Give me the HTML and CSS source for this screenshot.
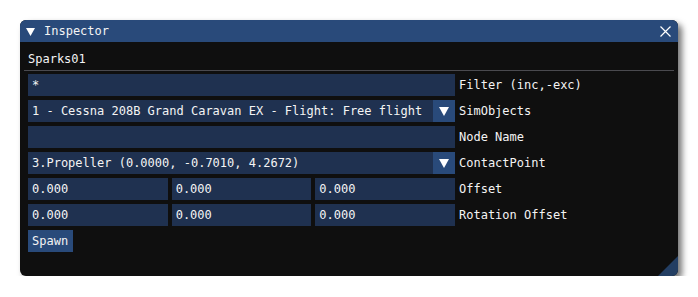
FILE: index.html
```html
<!DOCTYPE html>
<html lang="en">
<head>
    <meta charset="UTF-8">
    <title>Inspector</title>
    <link rel="stylesheet" href="styles.css">
</head>
<body>
    <div class="window">
        <div class="titlebar">
            <svg class="collapse" width="9" height="9" viewBox="0 0 9 9"><polygon points="0,1 9,1 4.5,9" fill="#ffffff"/></svg>
            <span class="title">Inspector</span>
            <svg class="close" width="11" height="11" viewBox="0 0 11 11"><path d="M0.5 0.5 L10.5 10.5 M10.5 0.5 L0.5 10.5" stroke="#ffffff" stroke-width="1.2"/></svg>
        </div>

        <div class="content">
            <div class="header">Sparks01</div>
            <div class="separator"></div>

            <div class="row">
                <div class="field">*</div>
                <div class="label">Filter (inc,-exc)</div>
            </div>

            <div class="row">
                <div class="field combo">
                    <span class="combo-text">1 - Cessna 208B Grand Caravan EX - Flight: Free flight</span>
                    <span class="combo-btn"><svg width="10" height="9" viewBox="0 0 10 9"><polygon points="0,0 10,0 5,9" fill="#ffffff"/></svg></span>
                </div>
                <div class="label">SimObjects</div>
            </div>

            <div class="row">
                <div class="field"></div>
                <div class="label">Node Name</div>
            </div>

            <div class="row">
                <div class="field combo">
                    <span class="combo-text">3.Propeller (0.0000, -0.7010, 4.2672)</span>
                    <span class="combo-btn"><svg width="10" height="9" viewBox="0 0 10 9"><polygon points="0,0 10,0 5,9" fill="#ffffff"/></svg></span>
                </div>
                <div class="label">ContactPoint</div>
            </div>

            <div class="row">
                <div class="triple">
                    <div class="field">0.000</div>
                    <div class="field">0.000</div>
                    <div class="field">0.000</div>
                </div>
                <div class="label">Offset</div>
            </div>

            <div class="row">
                <div class="triple">
                    <div class="field">0.000</div>
                    <div class="field">0.000</div>
                    <div class="field">0.000</div>
                </div>
                <div class="label">Rotation Offset</div>
            </div>

            <button type="button" class="spawn">Spawn</button>
        </div>

        <div class="grip"></div>
    </div>
</body>
</html>
```

FILE: styles.css
```css
body {
    margin: 0;
    background: #ffffff;
    font-family: "DejaVu Sans Mono", "Liberation Mono", monospace;
    font-size: 12px;
    color: #f4f4f4;
}

.window {
    position: relative;
    width: 658px;
    height: 256px;
    margin: 20px 0 0 20px;
    background: #0f0f0f;
    border-radius: 6px;
    overflow: hidden;
    box-shadow: 4px 4px 6px rgba(0, 0, 0, 0.55);
}

.titlebar {
    display: flex;
    align-items: center;
    height: 22px;
    padding: 0 7px 0 6px;
    background: #294a7a;
}

.collapse {
    margin-right: 9px;
}

.title {
    flex: 1;
}

.content {
    padding: 6px 8px;
}

.header {
    height: 22px;
    line-height: 22px;
}

.separator {
    height: 1px;
    margin: 0 -4px 3px;
    background: #4a4a4f;
}

.row {
    display: flex;
    align-items: center;
    height: 22px;
    margin-bottom: 4px;
}

.field {
    width: 427px;
    height: 22px;
    line-height: 22px;
    padding: 0 4px;
    box-sizing: border-box;
    background: #1f3150;
    white-space: nowrap;
    overflow: hidden;
}

.combo {
    display: flex;
    padding-right: 0;
}

.combo-text {
    flex: 1;
}

.combo-btn {
    display: flex;
    align-items: center;
    justify-content: center;
    width: 22px;
    height: 22px;
    background: #294a7a;
}

.triple {
    display: grid;
    grid-template-columns: 1fr 1fr 1fr;
    gap: 4px;
    width: 427px;
}

.triple .field {
    width: auto;
}

.label {
    margin-left: 4px;
    white-space: nowrap;
}

.spawn {
    height: 22px;
    padding: 0 5px 0 4px;
    border: none;
    background: #294a7a;
    color: #f4f4f4;
    font-family: inherit;
    font-size: 12px;
}

.grip {
    position: absolute;
    right: 0;
    bottom: 0;
    width: 20px;
    height: 20px;
    background: #233e63;
    clip-path: polygon(100% 0, 100% 100%, 0 100%);
}
```
